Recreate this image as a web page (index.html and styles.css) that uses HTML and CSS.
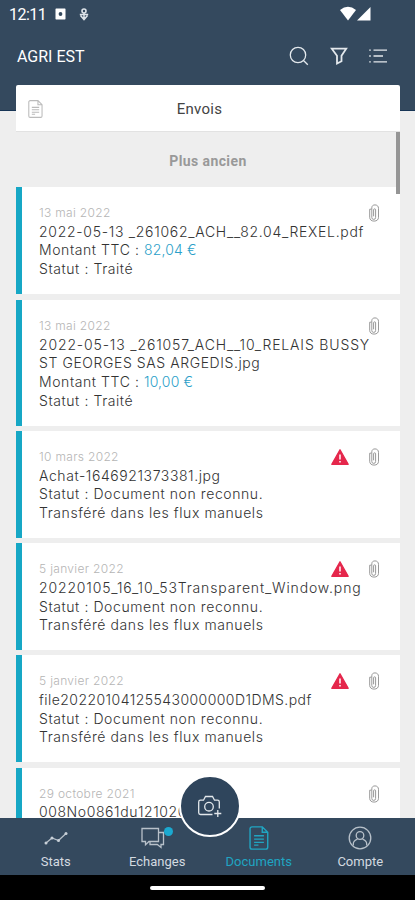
FILE: index.html
```
<!DOCTYPE html>
<html lang="fr">
<head>
<meta charset="utf-8" />
<title>AGRI EST - Documents</title>
<link rel="stylesheet" href="styles.css">
</head>

<body>
<!-- icônes réutilisées -->
<svg class="defs">
    <symbol id="clip" viewBox="0 0 12 18">
        <path d="M3.800 5.500v8a1.900 1.900 0 0 0 3.800 0V5.800a1 1 0 0 0-2 0v6.500M3.800 5.500V3.800C3.800 2 5 .9 7 .9s3.500 1.300 3.500 3.400v9c0 2.300-1.600 3.800-4.400 3.800s-4.400-1.500-4.400-3.800V5.200h2" />
    </symbol>
    <symbol id="warn" viewBox="0 0 18 16">
        <path d="M9 .8 17.200 15.300H.8z" fill="#e5274c" stroke="#e5274c" stroke-linejoin="round" />
        <path d="M9 5.500v5M9 12v1.500" stroke="#fff" stroke-width="1.500" />
    </symbol>
    <symbol id="doc" viewBox="0 0 18 22">
        <path d="M2.500.8H12l5 5v13.700a1.700 1.700 0 0 1-1.700 1.700H2.500A1.700 1.700 0 0 1 .8 19.500V2.500A1.700 1.700 0 0 1 2.500.8zM12 .8v5h5M4.500 9h9M4.500 12h9M4.500 15h9M4.500 17.500h4" />
    </symbol>
</svg>

<div id="wrap">
    <!-- en-tête -->
    <div id="header">
        <div class="status">
            <span class="clock">12:11</span>
            <svg class="st1" width="11" height="12" viewBox="0 0 11 12"><path d="M1 .5h9l.5.5v10l-.5.5H1l-.5-.5V1z" fill="#fff" /><circle cx="5.500" cy="6" r="1.900" fill="#34495e" /></svg>
            <svg class="st2" width="10" height="13" viewBox="0 0 10 13"><circle cx="5" cy="3" r="2" fill="none" stroke="#dde3e9" stroke-width="1.600" /><path d="M.8 6.500h8.400M1.500 7.500 5 11.500l3.500-4M5 5v6" fill="none" stroke="#dde3e9" stroke-width="1.500" /></svg>
            <svg class="st3" width="31" height="16" viewBox="0 0 31 16"><path d="M0 4Q8-2.500 16 4L8 14.500z" fill="#fff" /><path d="M30.500 1v13.500H17z" fill="#fff" /></svg>
        </div>
        <div class="bar">
            <h1>AGRI EST</h1>
            <svg width="20" height="20" viewBox="0 0 20 20"><circle cx="9" cy="9" r="7.700" /><path d="m14.500 14.500 4.300 4.300" /></svg>
            <svg class="filter" width="18" height="18" viewBox="0 0 18 18"><path d="M1.800 1.700h14.400l-4.700 7v5.500L7 16.500V8.700z" /></svg>
            <svg class="menu" width="20" height="16" viewBox="0 0 20 16"><path d="M5.500 2.200H19M5.500 8H15M5.500 13.800H19M1.200 2.200h1.600M1.200 8h1.600M1.200 13.800h1.600" /></svg>
        </div>
    </div>

    <!-- liste des documents -->
    <div id="content">
        <div class="tab"><svg class="tabicon"><use href="#doc" /></svg>Envois</div>
        <div class="scroll"></div>
        <h2>Plus ancien</h2>
        <ul>
            <li>
                <div class="icons"><svg class="clip"><use href="#clip" /></svg></div>
                <p class="date">13 mai 2022</p>
                <p class="name wide">2022-05-13 _261062_ACH__82.04_REXEL.pdf</p>
                <p>Montant TTC : <span>82,04 €</span></p>
                <p>Statut : Traité</p>
            </li>
            <li class="tall">
                <div class="icons"><svg class="clip"><use href="#clip" /></svg></div>
                <p class="date">13 mai 2022</p>
                <p class="name wider">2022-05-13 _261057_ACH__10_RELAIS BUSSY</p>
                <p class="name">ST GEORGES SAS ARGEDIS.jpg</p>
                <p>Montant TTC : <span>10,00 €</span></p>
                <p>Statut : Traité</p>
            </li>
            <li>
                <div class="icons"><svg class="warn"><use href="#warn" /></svg><svg class="clip"><use href="#clip" /></svg></div>
                <p class="date">10 mars 2022</p>
                <p class="name">Achat-1646921373381.jpg</p>
                <p>Statut : Document non reconnu.<br />Transféré dans les flux manuels</p>
            </li>
            <li>
                <div class="icons"><svg class="warn"><use href="#warn" /></svg><svg class="clip"><use href="#clip" /></svg></div>
                <p class="date">5 janvier 2022</p>
                <p class="name wider">20220105_16_10_53Transparent_Window.png</p>
                <p>Statut : Document non reconnu.<br />Transféré dans les flux manuels</p>
            </li>
            <li>
                <div class="icons"><svg class="warn"><use href="#warn" /></svg><svg class="clip"><use href="#clip" /></svg></div>
                <p class="date">5 janvier 2022</p>
                <p class="name tight">file20220104125543000000D1DMS.pdf</p>
                <p>Statut : Document non reconnu.<br />Transféré dans les flux manuels</p>
            </li>
            <li>
                <div class="icons"><svg class="clip"><use href="#clip" /></svg></div>
                <p class="date">29 octobre 2021</p>
                <p class="name">008No0861du12102021</p>
            </li>
        </ul>
    </div>

    <!-- barre de navigation -->
    <div id="nav">
        <a><svg width="24" height="24" viewBox="0 0 24 24"><path d="m2 17 6-5 6.500 2.500L22 7.500" /><g fill="#c8d0d8" stroke="none"><circle cx="2" cy="17" r="1.500" /><circle cx="8" cy="12" r="1.500" /><circle cx="14.500" cy="14.500" r="1.500" /><circle cx="22" cy="7.500" r="1.500" /></g></svg>Stats</a>
        <a class="chat"><svg width="24" height="24" viewBox="0 0 24 24"><path d="M1 2.500h16.500v13H8l-3.500 3.300v-3.300H1zM17.500 6.500H22.500v12H20v3l-3.700-3H9v-3" /></svg><i></i>Echanges</a>
        <a class="on"><svg width="20" height="24"><use href="#doc" /></svg>Documents</a>
        <a><svg width="24" height="24" viewBox="0 0 24 24"><circle cx="12" cy="12" r="10.800" /><circle cx="12" cy="9.500" r="3.800" /><path d="M5.300 19.500v-1.500c0-2.500 2-4 4.200-4.800M18.700 19.500v-1.500c0-2.500-2-4-4.200-4.800" /></svg>Compte</a>
    </div>
    <div class="camera">
        <svg width="26" height="24" viewBox="0 0 26 24"><path d="M15.500 20.500H3.500A1.800 1.800 0 0 1 1.700 18.700V8a1.800 1.800 0 0 1 1.800-1.800h3L8.500 2.500h7l2 3.700h3A1.800 1.800 0 0 1 22.300 8v6.500" /><circle cx="12" cy="12.700" r="4.300" /><path d="M20.800 16v7M17.300 19.500h7" /></svg>
    </div>
    <div id="home"><b></b></div>
</div>
</body>
</html>
```
FILE: styles.css
```
/* reset */
body,ul,p,h1,h2{padding:0; margin:0;}
li{list-style:none;}
svg{fill:none; stroke:#e3e8ec; stroke-width:1.3; flex:none;}
.defs{width:0; height:0; position:absolute;}

#wrap{width:415px; height:900px; overflow:hidden; position:relative; display:flex; flex-direction:column; background:#eee; font-family:Inter,Roboto,sans-serif;}

/* en-tête */
#header{height:111px; flex:none; background:#34495e; border-bottom:1px solid #173556; box-sizing:border-box; color:#fff; font-family:Roboto,sans-serif;}
.status{height:28px; display:flex; align-items:center; padding:0 44px 0 9px; box-sizing:border-box;}
.status svg{stroke:none;}
.clock{font-size:16px; width:46px; letter-spacing:-.5px;}
.st2{margin-left:13px;}
.st3{margin-left:auto;}
.bar{height:56px; display:flex; align-items:center; padding:0 27px 0 17px;}
.bar h1{flex:1; font-size:16px; font-weight:400; letter-spacing:0;}
.filter{margin-left:21px;}
.bar .filter{stroke-width:1.8;}
.menu{margin-left:20px;}

/* liste */
#content{flex:1; min-height:0; overflow:hidden; margin:-26px 15px 0 16px; position:relative;}
.tab{height:47px; line-height:49px; background:#fff; font-size:15px; color:#444; letter-spacing:.3px; border-bottom:1px solid #e2e2e2; box-sizing:border-box; padding:2px 17px 0 0; font-family:Roboto,sans-serif; border-radius:2px 2px 0 0; display:flex; align-items:center;}
.tabicon{width:15px; height:18px; stroke:#bbb; margin-left:12px; margin-right:auto;}
.tab::after{content:""; width:27px; margin-left:auto;}
.scroll{width:4px; height:62px; background:#959595; position:absolute; right:0; top:47px; z-index:1;}
h2{height:55px; text-align:center; font:bold 14px/58px Roboto,sans-serif; letter-spacing:.4px; color:#999;}
li{height:107px; margin-bottom:5.2px; padding:17px 0 0 17px; border-left:6px solid #16a7c5; background:#fff; box-sizing:border-box; position:relative;}
li:first-child{margin-bottom:5.8px;}
li.tall{height:126px;}
p{font-size:14px; line-height:18.7px; font-weight:300; color:#333; letter-spacing:.58px; white-space:nowrap;}
p span{color:#2b9fc9; letter-spacing:.15px;}
.date{font-size:12px; color:#b5b5b5; letter-spacing:.32px;}
.wide{letter-spacing:.71px;}
.wider{letter-spacing:.88px;}
.wider{letter-spacing:.85px;}
.tight{letter-spacing:.45px;}
.icons{position:absolute; right:20px; top:17px; display:flex; align-items:center; gap:19px;}
.clip{width:12px; height:18px; stroke:#999; stroke-width:1;}
.warn{width:18px; height:16px;}

/* navigation */
#nav{height:57px; flex:none; display:flex; background:#34495e; padding:0 4px 0 5px;}
#nav a{flex:1; display:flex; flex-direction:column; align-items:center; padding-top:8px; font:13px/15px Roboto,sans-serif; color:#d3dae0; gap:4px; position:relative;}
#nav svg{stroke:#b8c1ca;}
#nav a.on{color:#20a5c2;}
#nav .on svg{stroke:#20a5c2;}
.chat svg{margin-right:8px;}
.chat i{width:9px; height:9px; border-radius:50%; background:#1ba9d0; position:absolute; left:57px; top:9px;}
.camera{width:58px; height:58px; border:2px solid #fff; border-radius:50%; background:#2f455c; position:absolute; left:179px; top:775px; display:flex; align-items:center; justify-content:center;}
#home{height:25px; flex:none; background:#000; display:flex; align-items:center; justify-content:center;}
#home b{width:115px; height:4px; border-radius:2px; background:#fff;}
```
